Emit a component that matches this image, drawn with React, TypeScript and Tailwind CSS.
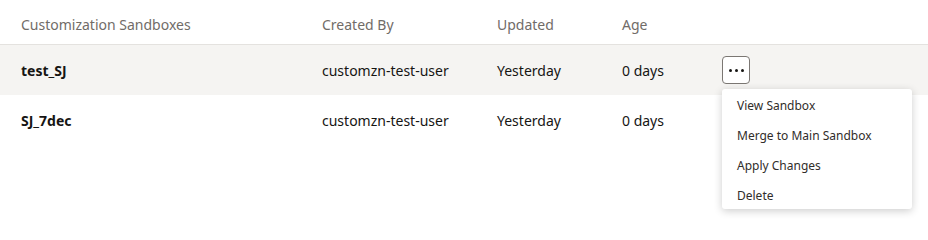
const rows = [
  { name: "test_SJ", by: "customzn-test-user", updated: "Yesterday", age: "0 days", active: true },
  { name: "SJ_7dec", by: "customzn-test-user", updated: "Yesterday", age: "0 days", active: false },
];

const menuItems = ["View Sandbox", "Merge to Main Sandbox", "Apply Changes", "Delete"];

export default function App() {
  return (
    <div className="h-[223px] w-[928px] bg-white font-['Noto_Sans',sans-serif] text-sm text-[#161513]">
      <div className="grid h-[45px] grid-cols-[322px_175px_125px_1fr] items-center border-b border-[#e4e2df] pt-[5px] text-[#716c68]">
        <div className="pl-[21px]">Customization Sandboxes</div>
        <div>Created By</div>
        <div>Updated</div>
        <div>Age</div>
      </div>
      {rows.map((row) => (
        <div
          key={row.name}
          className={`grid h-[50px] grid-cols-[322px_175px_125px_100px_1fr] items-center ${row.active ? "bg-[#f5f4f2]" : ""}`}
        >
          <div className="pl-[21px] pt-[2px] font-bold">{row.name}</div>
          <div className="pt-[2px]">{row.by}</div>
          <div className="pt-[2px]">{row.updated}</div>
          <div className="pt-[2px]">{row.age}</div>
          <div className="relative">
            {row.active && (
              <>
                <button className="flex h-[28px] w-[28px] items-center justify-center gap-[3px] rounded-[4px] border border-[#7b7773] bg-white">
                  <span className="h-[3px] w-[3px] rounded-full bg-[#161513]" />
                  <span className="h-[3px] w-[3px] rounded-full bg-[#161513]" />
                  <span className="h-[3px] w-[3px] rounded-full bg-[#161513]" />
                </button>
                <ul className="absolute left-0 top-[33px] z-10 w-[190px] rounded-[3px] bg-white text-xs shadow-[0_2px_8px_rgba(0,0,0,0.2)]">
                  {menuItems.map((item) => (
                    <li key={item} className="flex h-[30px] items-center pl-[15px] pt-[3px] text-[#312d2a]">
                      {item}
                    </li>
                  ))}
                </ul>
              </>
            )}
          </div>
        </div>
      ))}
    </div>
  );
}
